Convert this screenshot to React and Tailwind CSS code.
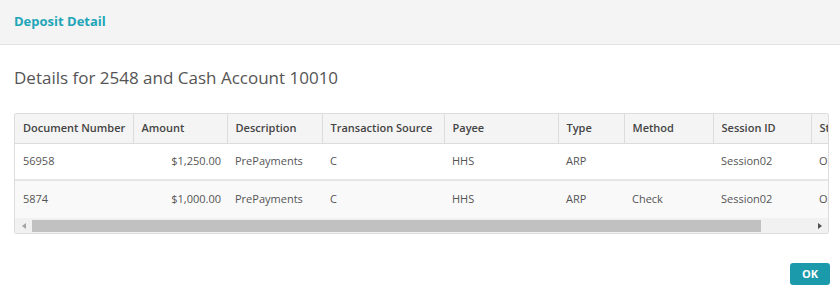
const columns = [
  { key: 'doc', label: 'Document Number', width: 118 },
  { key: 'amount', label: 'Amount', width: 94, right: true },
  { key: 'desc', label: 'Description', width: 95 },
  { key: 'source', label: 'Transaction Source', width: 122 },
  { key: 'payee', label: 'Payee', width: 114 },
  { key: 'type', label: 'Type', width: 66 },
  { key: 'method', label: 'Method', width: 89 },
  { key: 'session', label: 'Session ID', width: 98 },
  { key: 'status', label: 'Status', width: 92 },
]

const rows = [
  { id: 1, doc: '56958', amount: '$1,250.00', desc: 'PrePayments', source: 'C', payee: 'HHS', type: 'ARP', method: '', session: 'Session02', status: 'OS01' },
  { id: 2, doc: '5874', amount: '$1,000.00', desc: 'PrePayments', source: 'C', payee: 'HHS', type: 'ARP', method: 'Check', session: 'Session02', status: 'OS01' },
]

export default function App() {
  return (
    <div className="h-[298px] w-[840px] bg-white font-['Open_Sans',sans-serif]">
      <div className="flex h-[45px] items-center border-b border-[#e3e3e3] bg-[#f4f4f4] px-[14px]">
        <h2 className="text-[13px] font-bold text-[#22a5b8]">Deposit Detail</h2>
      </div>

      <div className="px-[14px]">
        <p className="mt-[21px] text-[17px] leading-[24px] text-[#555]">
          Details for 2548 and Cash Account 10010
        </p>

        <div className="mt-[23px] w-[815px] overflow-hidden rounded-[2px] border border-[#dcdcdc]">
          <table className="table-fixed border-collapse text-[11px]" style={{ width: 888 }}>
            <colgroup>
              {columns.map((c) => (
                <col key={c.key} style={{ width: c.width }} />
              ))}
            </colgroup>
            <thead>
              <tr className="h-[29px] bg-[#f4f4f4] text-left text-[#444]">
                {columns.map((c) => (
                  <th
                    key={c.key}
                    className="whitespace-nowrap border-r border-b border-[#dcdcdc] px-[8px] font-semibold"
                  >
                    {c.label}
                  </th>
                ))}
              </tr>
            </thead>
            <tbody className="text-[#555]">
              {rows.map((r, i) => (
                <tr
                  key={r.id}
                  className={i === 0 ? 'h-[37px] border-b-2 border-[#e6e6e6] bg-white' : 'h-[38px] bg-[#f9f9f9]'}
                >
                  {columns.map((c) => (
                    <td
                      key={c.key}
                      className={c.right ? 'whitespace-nowrap pl-[8px] pr-[6px] text-right' : 'whitespace-nowrap px-[8px] text-left'}
                    >
                      {r[c.key]}
                    </td>
                  ))}
                </tr>
              ))}
            </tbody>
          </table>

          <div className="flex h-[15px] items-center bg-[#f1f1f1]">
            <div className="flex w-[17px] justify-center">
              <svg width="4" height="6" viewBox="0 0 4 6">
                <path d="M4 0 L0 3 L4 6 Z" fill="#a3a3a3" />
              </svg>
            </div>
            <div className="h-[12px] w-[729px] bg-[#c1c1c1]" />
            <div className="flex-1" />
            <div className="flex w-[17px] justify-center">
              <svg width="4" height="6" viewBox="0 0 4 6">
                <path d="M0 0 L4 3 L0 6 Z" fill="#505050" />
              </svg>
            </div>
          </div>
        </div>

        <div className="mt-[29px] flex justify-end">
          <button className="mr-[-4px] h-[22px] w-[40px] rounded-[3px] bg-[#1a9aaa] text-[11px] font-bold text-white">
            OK
          </button>
        </div>
      </div>
    </div>
  )
}
